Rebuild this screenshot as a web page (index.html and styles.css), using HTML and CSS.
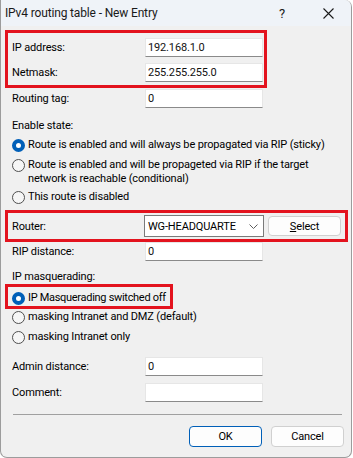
FILE: index.html
```html
<!DOCTYPE html>
<html>
<head>
<meta charset="utf-8">
<link rel="stylesheet" href="styles.css">
</head>
<body>
<div class="win">
  <div class="titlebar">
    <span class="title">IPv4 routing table - New Entry</span>
    <span class="help">?</span>
    <span class="close"><svg width="11" height="11" viewBox="0 0 11 11"><path d="M0.5 0.5L10.5 10.5M10.5 0.5L0.5 10.5" stroke="#1a1a1a" stroke-width="1.1" fill="none"/></svg></span>
  </div>
  <div class="content">
    <div class="hl hl1">
      <div class="row"><span class="lbl">IP address:</span><span class="edit">192.168.1.0</span></div>
      <div class="row gap6"><span class="lbl">Netmask:</span><span class="edit">255.255.255.0</span></div>
    </div>
    <div class="row plain tag"><span class="lbl">Routing tag:</span><span class="edit">0</span></div>

    <div class="grp grp-enable">Enable state:</div>
    <div class="radio r1"><span class="dot on"></span><span class="rtext">Route is enabled and will always be propagated via RIP (sticky)</span></div>
    <div class="radio r2"><span class="dot"></span><span class="rtext">Route is enabled and will be propageted via RIP if the target<br>network is reachable (conditional)</span></div>
    <div class="radio r3"><span class="dot"></span><span class="rtext">This route is disabled</span></div>

    <div class="hl hl2">
      <div class="row router"><span class="lbl lbl-router">Router:</span>
        <span class="combo"><span class="ctext">WG-HEADQUARTE</span><svg class="chev" width="9" height="5" viewBox="0 0 9 5"><path d="M0.5 0.5L4.5 4.5L8.5 0.5" stroke="#5f5f5f" stroke-width="1" fill="none"/></svg></span>
        <span class="btn sel"><u>S</u>elect</span>
      </div>
    </div>
    <div class="row plain"><span class="lbl">RIP distance:</span><span class="edit">0</span></div>

    <div class="grp grp-masq">IP masquerading:</div>
    <div class="hl hl3">
      <div class="radio"><span class="dot on"></span><span class="rtext tight">IP Masquerading switched off</span></div>
    </div>
    <div class="radio m1"><span class="dot"></span><span class="rtext">masking Intranet and DMZ (default)</span></div>
    <div class="radio m2"><span class="dot"></span><span class="rtext">masking Intranet only</span></div>

    <div class="row plain admin"><span class="lbl">Admin distance:</span><span class="edit">0</span></div>
    <div class="row plain comment"><span class="lbl">Comment:</span><span class="edit"></span></div>

    <div class="sep"></div>
    <div class="buttons">
      <span class="btn ok">OK</span>
      <span class="btn">Cancel</span>
    </div>
  </div>
</div>
</body>
</html>
```

FILE: styles.css
```css
* { box-sizing: border-box; }
html, body { margin: 0; padding: 0; }
body {
  background: #ffffff;
  width: 353px;
  height: 458px;
  overflow: hidden;
  font-family: Roboto, "Liberation Sans", sans-serif;
  font-size: 11px;
  letter-spacing: -0.15px;
  color: #000;
}
.win {
  width: 352px;
  height: 458px;
  background: #f0f0f0;
  border: 1px solid #9c9c9c;
  border-top: none;
  border-radius: 0 7px 7px 7px;
  overflow: hidden;
}
.titlebar {
  height: 26px;
  background: #eff3f8;
  display: flex;
  align-items: center;
}
.title {
  margin-left: 4px;
  font-size: 12px;
  flex: 1;
  color: #1a1a1a;
  white-space: nowrap;
}
.help {
  font-size: 13px;
  width: 14px;
  margin-right: 30px;
  color: #1a1a1a;
}
.close {
  width: 11px;
  height: 11px;
  margin-right: 17px;
  display: flex;
}
.content {
  padding-left: 4px;
}
.hl {
  border: 3px solid #e3131e;
}
.hl1 {
  margin-top: 4px;
  width: 262px;
  padding: 5px 0 3px 4px;
}
.row {
  display: flex;
  align-items: center;
  height: 19px;
  white-space: nowrap;
}
.row.plain { padding-left: 7px; }
.gap6 { margin-top: 6px; }
.tag { margin-top: 1px; }
.lbl {
  width: 133px;
  flex: none;
}
.edit {
  width: 118px;
  height: 19px;
  background: #fff;
  border: 1px solid #e6e6e6;
  border-bottom-color: #8a8a8a;
  padding-left: 2px;
  line-height: 17px;
  color: #111;
}
.grp {
  line-height: 16px;
  padding-left: 7px;
}
.grp-enable { margin-top: 10px; }
.radio {
  display: flex;
  align-items: flex-start;
  line-height: 14px;
  padding-left: 7px;
  white-space: nowrap;
}
.hl3 .radio { padding-left: 4px; }
.tight { letter-spacing: -0.3px; }
.dot {
  width: 13px;
  height: 13px;
  flex: none;
  border-radius: 50%;
  border: 1px solid #4f4f4f;
  background: #f6f6f6;
  margin-top: 0.5px;
  margin-right: 3px;
}
.dot.on {
  border: 4px solid #005fb8;
  background: #fff;
}
.r1 { margin-top: 4px; }
.r2 { margin-top: 6px; }
.r3 { margin-top: 4px; }
.hl2 {
  margin-top: 6px;
  width: 343px;
  padding: 2px 0 2px 4px;
}
.router { height: 22px; }
.lbl-router { width: 132px; }
.combo {
  width: 120px;
  height: 22px;
  background: #fff;
  border: 1px solid #7a7a7a;
  display: flex;
  align-items: center;
  padding-left: 3px;
  padding-right: 5px;
}
.ctext { flex: 1; }
.btn {
  display: inline-flex;
  align-items: center;
  justify-content: center;
  width: 73px;
  height: 21px;
  background: #fdfdfd;
  border: 1px solid #d0d0d0;
  border-radius: 4px;
}
.sel { margin-left: 4px; height: 20px; }
.grp-masq { margin-top: 9px; line-height: 14px; }
.hl3 {
  margin-top: 0;
  width: 168px;
  padding: 4px 0 1px 0;
}
.m1 { margin-top: 1px; }
.m2 { margin-top: 6px; }
.admin { margin-top: 13px; }
.comment { margin-top: 7px; }
.sep {
  margin: 12px 0 0 8px;
  width: 329px;
  height: 1px;
  background: #a0a0a0;
}
.buttons {
  margin-top: 11px;
  display: flex;
  justify-content: flex-end;
  gap: 9px;
  padding-right: 7px;
}
.ok { border-color: #005fb8; }
```
